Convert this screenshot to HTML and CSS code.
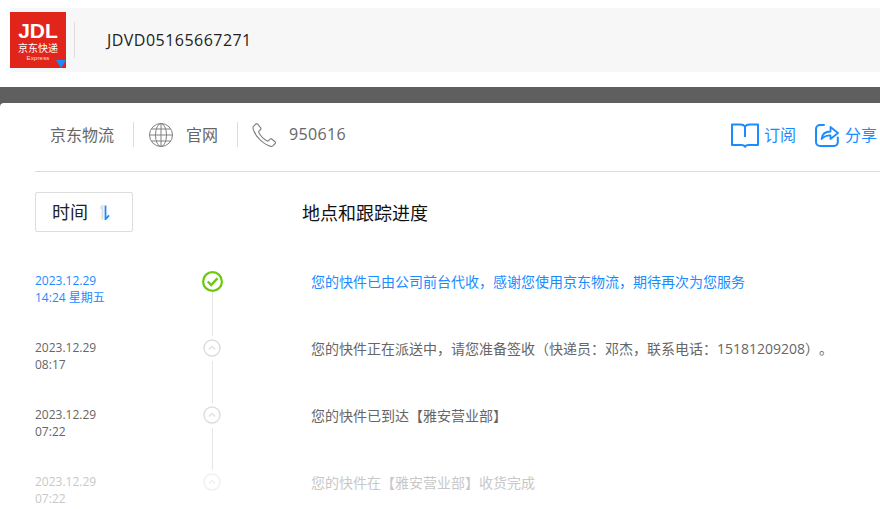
FILE: index.html
```html
<!DOCTYPE html>
<html lang="zh-CN">
<head>
<meta charset="utf-8">
<title>JDVD05165667271</title>
<link rel="stylesheet" href="styles.css">
</head>
<body>
<header class="top">
  <div class="track">
    <div class="logo">
      <span class="logo-jdl">JDL</span>
      <span class="logo-cn">京东快递</span>
      <span class="logo-en">Express</span>
      <i class="logo-tri"></i>
    </div>
    <span class="vrule"></span>
    <span class="number">JDVD05165667271</span>
  </div>
</header>
<div class="sheet">
  <main class="card">
    <nav class="carrier">
      <span class="c-name">京东物流</span>
      <span class="c-rule"></span>
      <svg class="globe" viewBox="0 0 24 24" fill="none" stroke="#808080" stroke-width="1">
        <circle cx="12" cy="12" r="11.5"/>
        <ellipse cx="12" cy="12" rx="5.5" ry="11.5"/>
        <path d="M12 .5v23M.5 12h23M2.300 6h19.400M2.300 18h19.400"/>
      </svg>
      <span class="c-text">官网</span>
      <span class="c-rule c-rule-2"></span>
      <svg class="phone" viewBox="0 0 24 24" fill="none" stroke="#808080" stroke-width="1.100" stroke-linejoin="round">
        <path d="M1.400 3.400 3.900 1c.6-.5 1.300-.5 1.800.1l3 3.800c.4.500.3 1.200-.1 1.600L6.900 8.200c-.3.300-.3.600-.2 1 .9 1.900 2.300 3.800 3.600 5.100 1.400 1.400 3.100 2.800 5 3.700.4.200.8.100 1.100-.2l1.700-1.700c.4-.4 1.100-.5 1.600-.1l3.400 2.700c.6.500.6 1.300.1 1.800l-2.400 2.400c-.6.500-1.300.7-2.100.5-3.700-1-7.600-3.500-10.800-6.700C4.700 13.500 2.200 9.800 1.100 5.800.9 4.900 1 4 1.400 3.400Z"/>
      </svg>
      <span class="c-num">950616</span>
      <span class="c-actions">
        <svg class="book" viewBox="0 0 28 26" fill="none" stroke="#1a8cff" stroke-width="2" stroke-linejoin="round">
          <path d="M1 2.500h8.500c2 0 3.600.8 4.500 2 .9-1.200 2.500-2 4.500-2H27v20.500H17.500c-1.500 0-2.800.4-3.500 1.700-.7-1.300-2-1.700-3.500-1.700H1Z"/>
          <path d="M14 5v10"/>
        </svg>
        <span class="c-link">订阅</span>
        <svg class="share" viewBox="0 0 24 26" fill="none" stroke="#1a8cff" stroke-width="2" stroke-linecap="round" stroke-linejoin="round">
          <path d="M9 3H5a4 4 0 0 0-4 4v13a4 4 0 0 0 4 4h14a4 4 0 0 0 3.800-3.500v-5"/>
          <path d="M6.500 17c.6-5 4-7.500 9-7.500V5L23 11l-7.500 6v-3.700c-3.500 0-6.500.9-9 3.700Z" stroke-width="1.800"/>
        </svg>
        <span class="c-link c-link-2">分享</span>
      </span>
    </nav>
    <div class="heads">
      <button class="sort" type="button"><span class="sort-label">时间</span>
        <svg class="sort-arrows" viewBox="0 0 10 15" fill="none">
          <path d="M2.500 14.500V.7L.5 3.500" stroke="#dcdcdc" stroke-width="1.800"/>
          <path d="M5.500.5v13.800l3.500-4" stroke="#1a8cff" stroke-width="1.800"/>
        </svg>
      </button>
      <h2 class="place">地点和跟踪进度</h2>
    </div>
    <ol class="timeline">
      <li class="step step-now">
        <time class="when">2023.12.29<br>14:24 星期五</time>
        <span class="node">
          <svg class="done" viewBox="0 0 21 21" fill="none" stroke="#6bc90a">
            <circle cx="10.500" cy="10.500" r="9.400" stroke-width="2.200"/>
            <path d="M5.800 10.500l3.400 3.500 6.200-6.600" stroke-width="2.400"/>
          </svg>
          <span class="line"></span>
        </span>
        <p class="msg">您的快件已由公司前台代收，感谢您使用京东物流，期待再次为您服务</p>
      </li>
      <li class="step">
        <time class="when">2023.12.29<br>08:17</time>
        <span class="node">
          <svg class="dot" viewBox="0 0 18 18" fill="none" stroke="#dedede"><circle cx="9" cy="9" r="8" stroke-width="1.500"/><path d="M5.800 10.500 9 7.500l3.200 3" stroke-width="1.200"/></svg>
          <span class="line"></span>
        </span>
        <p class="msg">您的快件正在派送中，请您准备签收（快递员：邓杰，联系电话：15181209208）。</p>
      </li>
      <li class="step">
        <time class="when">2023.12.29<br>07:22</time>
        <span class="node">
          <svg class="dot" viewBox="0 0 18 18" fill="none" stroke="#dedede"><circle cx="9" cy="9" r="8" stroke-width="1.500"/><path d="M5.800 10.500 9 7.500l3.200 3" stroke-width="1.200"/></svg>
          <span class="line"></span>
        </span>
        <p class="msg">您的快件已到达【雅安营业部】</p>
      </li>
      <li class="step step-fade">
        <time class="when">2023.12.29<br>07:22</time>
        <span class="node">
          <svg class="dot" viewBox="0 0 18 18" fill="none" stroke="#dedede"><circle cx="9" cy="9" r="8" stroke-width="1.500"/><path d="M5.800 10.500 9 7.500l3.200 3" stroke-width="1.200"/></svg>
        </span>
        <p class="msg">您的快件在【雅安营业部】收货完成</p>
      </li>
    </ol>
  </main>
</div>
</body>
</html>
```
FILE: styles.css
```css
* { box-sizing: border-box; }
html, body { margin: 0; padding: 0; background: #fff; }
body {
  width: 880px;
  height: 509px;
  overflow: hidden;
  font-family: "Open Sans", "Noto Sans CJK SC", sans-serif;
  color: #666;
  text-spacing-trim: space-all;
}
.top { padding: 8px 0 15px 10px; }
.track {
  display: flex;
  align-items: center;
  height: 64px;
  background: #f7f7f7;
}
.logo {
  position: relative;
  display: flex;
  flex-direction: column;
  align-items: center;
  flex: none;
  width: 56px;
  height: 56px;
  padding-top: 8px;
  background: #e1251b;
  color: #fff;
}
.logo-jdl {
  font: bold 21px/21px "Liberation Sans", sans-serif;
}
.logo-cn {
  margin-top: 2px;
  font: 10px/11px "Liberation Sans", "Noto Sans CJK SC", sans-serif;
}
.logo-en {
  margin-top: 1px;
  font: 6px/6px "Liberation Sans", sans-serif;
  letter-spacing: .2px;
  opacity: .85;
}
.logo-tri {
  position: absolute;
  right: 0;
  bottom: 0;
  width: 0;
  height: 0;
  border-style: solid;
  border-width: 8px 5px 0;
  border-color: #1a8cff transparent transparent;
}
.vrule {
  flex: none;
  width: 1px;
  height: 36px;
  margin-left: 8px;
  background: #ddd;
}
.number {
  margin-left: 32px;
  font-size: 16px;
  letter-spacing: .47px;
  color: #222;
}
.sheet {
  padding-top: 16px;
  height: 422px;
  background: #5f5f5f;
}
.card {
  height: 406px;
  padding-left: 35px;
  background: #fff;
  border-radius: 4px 0 0 0;
}
.carrier {
  display: flex;
  align-items: center;
  height: 69px;
  padding: 0 3px 5px 15px;
  border-bottom: 1px solid #ddd;
  font-size: 16px;
  white-space: nowrap;
}
.c-name, .c-text, .c-num { padding-bottom: 2px; }
.c-rule {
  flex: none;
  width: 1px;
  height: 25px;
  margin: 0 15px 0 19px;
  background: #ddd;
}
.c-rule-2 { margin-left: 19px; margin-right: 14px; }
.globe { flex: none; width: 24px; height: 24px; }
.c-text { margin-left: 13px; }
.phone { flex: none; width: 24px; height: 24px; }
.c-num { margin-left: 13px; letter-spacing: .35px; }
.c-actions {
  display: flex;
  align-items: center;
  margin-left: auto;
  color: #1a8cff;
}
.book { width: 28px; height: 26px; }
.share { width: 24px; height: 26px; margin-left: 19px; }
.c-link { margin-left: 5px; padding-bottom: 2px; }
.c-link-2 { margin-left: 6px; }
.heads {
  display: flex;
  align-items: center;
  height: 40px;
  margin-top: 20px;
}
.sort {
  display: flex;
  align-items: center;
  flex: none;
  width: 98px;
  height: 40px;
  padding: 0 0 0 16px;
  background: #fff;
  border: 1px solid #ddd;
  border-radius: 2px;
  font: 18px "Noto Sans CJK SC", sans-serif;
  color: #222;
}
.sort-label { padding-bottom: 2px; }
.sort-arrows { width: 10px; height: 15px; margin-left: 12px; }
.place {
  margin: 0 0 1px 169px;
  font: 400 18px "Noto Sans CJK SC", sans-serif;
  color: #111;
}
.timeline {
  margin: 40px 0 0;
  padding: 0;
  list-style: none;
}
.step {
  display: grid;
  grid-template-columns: 168px 18px 1fr;
  height: 67px;
}
.step-fade { height: 35px; }
.when {
  font-size: 12px;
  line-height: 17px;
}
.node {
  display: flex;
  flex-direction: column;
  align-items: center;
  height: 67px;
}
.step-fade .node { height: 35px; }
.dot { flex: none; width: 18px; height: 18px; }
.done { flex: none; width: 21px; height: 21px; margin-top: -1px; }
.line {
  flex: none;
  width: 1px;
  height: 42px;
  margin-top: 4px;
  background: #e6e6e6;
}
.step-now .line { height: 44px; margin-top: 0; }
.msg {
  margin: 1px 0 0 90px;
  font-size: 14px;
  line-height: 17px;
}
.step-now .when, .step-now .msg { color: #1a8cff; }
.step-fade .when, .step-fade .msg { color: #c8c8c8; }
.step-fade .dot { opacity: .45; }
```
